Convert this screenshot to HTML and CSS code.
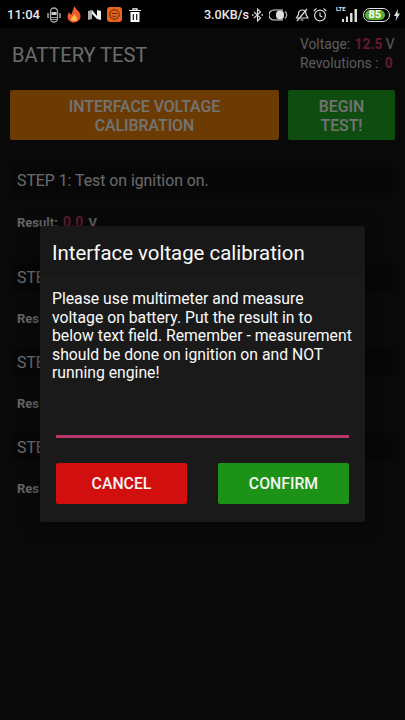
FILE: index.html
```html
<!DOCTYPE html>
<html lang="en">

<head>
    <meta charset="UTF-8">
    <title>Battery Test</title>
    <link rel="stylesheet" href="styles.css">
</head>

<body>
    <div class="status-bar">
        <span class="clock">11:04</span>
        <div class="status-left">
            <!-- robot -->
            <svg width="14" height="16" viewBox="0 0 14 16"><rect x="3.500" y="1" width="7" height="14" rx="3.500" fill="none" stroke="#aaa" stroke-width="1.300"/><rect x="4.500" y="5" width="5" height="3" fill="#ccc"/><path d="M4 10.500h6M4 12.500h6" stroke="#999"/><path d="M1 6v5M13 6v5" stroke="#999" stroke-width="1.600"/></svg>
            <!-- flame -->
            <svg width="14" height="17" viewBox="0 0 14 17"><path d="M7.500 0c.5 3 5.500 5 6 9.500.4 4-3 7-6.500 7S.4 14 .5 10.500c0-2 1-3.500 2-4.500 0 1.500.7 2.500 1.700 2.500C5.500 6.500 6 3 7.500 0z" fill="#ef5a28"/><path d="M7.300 8c.7 1.800 3.200 3 2.900 5.400-.3 2-5.800 2-6.200 0C3.700 11.500 6.500 10 7.300 8z" fill="#fbb84f"/></svg>
            <!-- N app -->
            <svg width="13" height="12" viewBox="0 0 13 12"><path d="M0 2l4-1v9l-4 1z" fill="#aaa"/><path d="M4 1l5 6V1l4 1v9l-4-1-5-5z" fill="#eee"/></svg>
            <!-- orange app -->
            <svg width="15" height="15" viewBox="0 0 15 15"><rect width="15" height="15" rx="3" fill="#e8641c"/><circle cx="7.500" cy="7.500" r="4.700" fill="none" stroke="#5a2408"/><path d="M5 6.500h5M5.500 9c1 .8 3 .8 4 0" fill="none" stroke="#5a2408"/></svg>
            <!-- trash -->
            <svg width="12" height="14" viewBox="0 0 12 14"><path d="M0 2.500h12M4 2.500V.8h4v1.700" stroke="#fff" stroke-width="1.200" fill="none"/><path d="M1.500 4h9v10h-9z" fill="#fff"/><path d="M4.300 6v6M7.700 6v6" stroke="#000" stroke-width="1.100"/></svg>
        </div>
        <div class="status-right">
            <span class="speed">3.0KB/s</span>
            <!-- bluetooth -->
            <svg class="icon-bt" width="11" height="14" viewBox="0 0 11 14"><path d="M2 4l6.500 6L5.500 13V1l3 3L2 10" fill="none" stroke="#ddd" stroke-width="1.100"/><path d="M0 7h1.500M9.500 7H11" stroke="#ddd" stroke-width="1.300"/></svg>
            <!-- toggle -->
            <svg class="icon-toggle" width="19" height="12" viewBox="0 0 19 12"><path d="M14 1H5a5 5 0 0 0 0 10h9" fill="none" stroke="#ddd" stroke-width="1.100"/><rect x="7" y="1.500" width="8" height="9" rx="4" fill="#ddd"/><path d="M16 2.500a4.500 4.500 0 0 1 0 7" fill="none" stroke="#bbb" stroke-width="1.200"/></svg>
            <!-- muted bell -->
            <svg class="icon-bell" width="14" height="14" viewBox="0 0 14 14"><path d="M7 2c3 0 4 2 4 4.500l2 3.500H1.500l2-3.500C3.500 4 4 2 7 2z" fill="none" stroke="#ddd" stroke-width="1.200"/><path d="M5.500 12h3M2 13L12 1" stroke="#ddd" stroke-width="1.200"/></svg>
            <!-- alarm -->
            <svg class="icon-alarm" width="14" height="15" viewBox="0 0 14 15"><circle cx="7" cy="8.500" r="5.400" fill="none" stroke="#ddd" stroke-width="1.200"/><path d="M7 5.500v3.300l2.300 1.200M.8 4l2.700-2.700M13.200 4l-2.700-2.700" fill="none" stroke="#ddd" stroke-width="1.100"/></svg>
            <span class="signal">
                <span class="lte">LTE</span>
                <svg width="15" height="13" viewBox="0 0 15 13"><path d="M0 10h2v3H0zM4 7.500h2V13H4zM8 4h2.500v9H8zM12.500 0H15v13h-2.500z" fill="#ddd"/></svg>
            </span>
            <span class="battery"><span class="battery-level">85</span></span>
            <svg class="icon-bolt" width="6" height="12" viewBox="0 0 6 12"><path d="M4 0L0 7h2.500L1.500 12 6 4.500H3.500z" fill="#ddd"/></svg>
        </div>
    </div>

    <div class="screen">
        <header class="app-bar">
            <h1 class="app-title">BATTERY TEST</h1>
            <div class="readings">
                <div>Voltage: <b class="value voltage">12.5</b> V</div>
                <div>Revolutions : <b class="value revs">0</b></div>
            </div>
        </header>

        <div class="actions">
            <button class="action orange">INTERFACE VOLTAGE CALIBRATION</button>
            <button class="action green">BEGIN TEST!</button>
        </div>

        <section class="step step-first">
            <div class="step-title">STEP 1: Test on ignition on.</div>
            <div class="step-result">Result: <span class="value">0.0</span> V</div>
        </section>
        <section class="step">
            <div class="step-title">STE</div>
            <div class="step-result">Res</div>
        </section>
        <section class="step">
            <div class="step-title">STE</div>
            <div class="step-result">Res</div>
        </section>
        <section class="step">
            <div class="step-title">STE</div>
            <div class="step-result">Res</div>
        </section>

        <div class="overlay"></div>

        <div class="dialog">
            <h2 class="dialog-title">Interface voltage calibration</h2>
            <div class="dialog-body">
                <p class="dialog-text">Please use multimeter and measure voltage on battery. Put the result in to below text field. Remember - measurement should be done on ignition on and NOT running engine!</p>
                <div class="field"></div>
                <div class="dialog-buttons">
                    <button class="dialog-btn cancel">CANCEL</button>
                    <button class="dialog-btn confirm">CONFIRM</button>
                </div>
            </div>
        </div>
    </div>
</body>

</html>
```

FILE: styles.css
```css
* {
    box-sizing: border-box;
}

html, body {
    margin: 0;
    height: 720px;
    overflow: hidden;
}

body {
    font-family: Roboto, sans-serif;
    background: #000;
}

/* status bar */
.status-bar {
    height: 28px;
    display: flex;
    align-items: center;
    background: #000;
    color: #e8e8e8;
    padding: 1px 5px 0 7px;
}

.clock {
    font-size: 13px;
    font-weight: 500;
}

.status-left {
    display: flex;
    align-items: center;
    gap: 6.5px;
    margin-left: 7px;
}

.status-right {
    display: flex;
    align-items: center;
    margin-left: auto;
}

.speed {
    font-size: 12.6px;
    font-weight: 500;
}

.icon-bt {
    margin-left: 3px;
}

.icon-toggle {
    margin-left: 6px;
}

.icon-bell {
    margin-left: 7px;
}

.icon-alarm {
    margin-left: 4px;
}

.icon-bolt {
    margin-left: 4px;
}

.signal {
    position: relative;
    display: block;
    width: 21px;
    height: 15px;
    margin-left: 9px;
}

.signal svg {
    position: absolute;
    right: 0;
    bottom: 0;
}

.lte {
    position: absolute;
    left: 0;
    top: -2px;
    font-size: 6px;
    font-weight: 700;
}

.battery {
    display: block;
    width: 27px;
    height: 14px;
    border: 1.5px solid #e4e4e4;
    border-radius: 7px;
    padding: 1px;
    margin-left: 6px;
}

.battery-level {
    display: block;
    width: 85%;
    height: 100%;
    background: #57b12e;
    border-radius: 5px;
    color: #fff;
    font-size: 11px;
    font-weight: 700;
    line-height: 9px;
    text-align: center;
}

/* main screen */
.screen {
    position: relative;
    height: 692px;
    background: #161616;
    padding: 0 10px;
}

.app-bar {
    display: flex;
    justify-content: space-between;
    height: 62px;
}

.app-title {
    margin: 15px 0 0 2px;
    font-size: 20px;
    font-weight: 400;
    color: #ebebeb;
}

.readings {
    margin-top: 7px;
    width: 95px;
    font-size: 13.8px;
    line-height: 19px;
    color: #c8c8c8;
    white-space: nowrap;
}

.value {
    color: #d83a70;
    font-weight: 700;
}

.voltage {
    margin: 0 0 0 1px;
}

.revs {
    margin-left: 3px;
}

.actions {
    display: flex;
    gap: 9px;
}

.action {
    height: 50px;
    border: 0;
    border-radius: 2px;
    font-family: inherit;
    font-size: 15.8px;
    font-weight: 500;
    line-height: 19px;
    color: #fff;
    padding: 2px 30px 0;
}

.orange {
    flex: 1;
    background: #f08208;
}

.green {
    width: 107px;
    background: #1fa823;
    padding: 2px 24px 0;
}

.step {
    margin: 0 2px;
}

.step-first {
    margin-top: 26px;
    margin-bottom: 12px;
}

.step-title {
    height: 28px;
    padding-left: 5px;
    background: #111;
    color: #e8e8e8;
    font-size: 15.8px;
    line-height: 29px;
}

.step-result {
    height: 57px;
    padding: 20px 0 0 5px;
    font-size: 13px;
    font-weight: 700;
    color: #dcdcdc;
}

.step-result .value {
    font-size: 14px;
    margin: 0 2px;
}

/* dialog */
.overlay {
    position: absolute;
    inset: 0;
    background: rgba(0, 0, 0, 0.55);
}

.dialog {
    position: absolute;
    left: 40px;
    top: 198px;
    width: 325px;
    height: 296px;
    background: #181818;
    border-radius: 2px;
    box-shadow: 0 2px 16px rgba(0, 0, 0, 0.5);
    color: #fafafa;
}

.dialog-title {
    margin: 0;
    height: 50px;
    padding: 15px 12px 0;
    font-size: 20.4px;
    font-weight: 400;
    line-height: 24px;
}

.dialog-body {
    height: 246px;
    padding: 14px 12px 0;
    background: #1a1a1a;
    border-radius: 2px;
}

.dialog-text {
    margin: 0;
    font-size: 15.75px;
    line-height: 18.6px;
}

.field {
    height: 3px;
    margin: 52px 4px 0;
    background: #b8386c;
}

.dialog-buttons {
    display: flex;
    justify-content: space-between;
    margin: 25px 4px 0;
}

.dialog-btn {
    width: 131px;
    height: 41px;
    border: 0;
    border-radius: 2px;
    font-family: inherit;
    font-size: 15.8px;
    font-weight: 500;
    color: #f4f4f4;
}

.cancel {
    background: #d10f0f;
}

.confirm {
    background: #1c9316;
}
```
